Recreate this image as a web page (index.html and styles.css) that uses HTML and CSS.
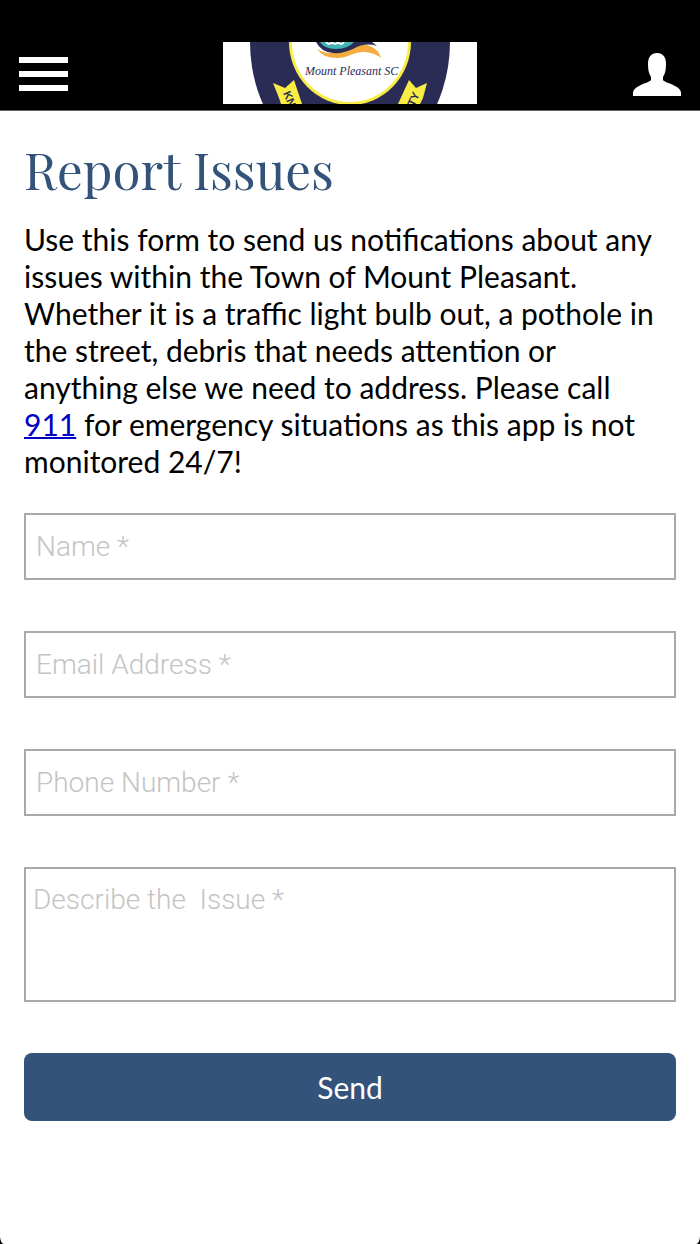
FILE: index.html
```html
<!DOCTYPE html>
<html lang="en">
<head>
<meta charset="utf-8">
<meta name="viewport" content="width=device-width, initial-scale=1">
<title>Report Issues</title>
<link rel="stylesheet" href="styles.css">
</head>
<body>
<div class="screen">
  <header class="topbar">
    <button class="icon-button" type="button" aria-label="Menu">
      <svg width="50" height="34" viewBox="0 0 50 34"><path fill="#fff" d="M1 0h49v6H1zM1 14h49v6H1zM1 28h49v6H1z"/></svg>
    </button>
    <svg class="logo" width="254" height="62" viewBox="0 0 254 62" role="img" aria-label="Mount Pleasant SC">
      <rect width="254" height="62" fill="#fff"/>
      <ellipse cx="127" cy="0" rx="100" ry="126" fill="#2a2c55"/>
      <ellipse cx="127" cy="0" rx="61" ry="63" fill="#f9ec45"/>
      <ellipse cx="127" cy="0" rx="58" ry="60" fill="#fff"/>
      <path fill="#f4ab3f" d="M94 7q6 9 20 9c11 0 17-7 28-6q10 1 16 6-3-9-11-12-12-4-24 3-16 8-29 0z"/>
      <path fill="#2a2c55" d="M93 0h56l5 4q-12-4-24 3-11 5-20 4-12-1-17-11z"/>
      <path fill="#43b5b5" d="M97 0h34q-6 7-18 7-12 0-16-7z"/>
      <path fill="none" stroke="#fff" stroke-width="2" d="M103 0q3 4 6 0q3 4 6 0q3 4 6 0"/>
      <text class="logo-name" x="82" y="33">Mount Pleasant SC</text>
      <path fill="#f9ec45" d="M50 41l12 5 9-8 8 24H58l-2-6z"/>
      <path fill="#f9ec45" d="M204 41l-11 5-7-8-11 24h22l3-6z"/>
      <text class="logo-ribbon" transform="translate(60 51) rotate(67)">KN</text>
      <text class="logo-ribbon" transform="translate(191 65) rotate(-65)">TY</text>
    </svg>
    <button class="icon-button" type="button" aria-label="Account">
      <svg width="50" height="43" viewBox="0 0 50 43"><path fill="#fff" d="M25 0c6 0 9 4 9 11 0 6-1 10-3 13v3c1 2 7 3 12 6 4 2 6 4 6 7v3H1v-3c0-3 2-5 6-7 5-3 11-4 12-6v-3c-2-3-3-7-3-13 0-7 3-11 9-11z"/></svg>
    </button>
  </header>
  <main class="content">
    <h1 class="title">Report Issues</h1>
    <p class="intro">Use this form to send us notifications about any issues within the Town of Mount Pleasant. Whether it is a traffic light bulb out, a pothole in the street, debris that needs attention or anything else we need to address. Please call <a class="phone" href="tel:911">911</a> for emergency situations as this app is not monitored 24/7!</p>
    <form class="form">
      <input class="field" type="text" aria-label="Name" placeholder="Name *" required>
      <input class="field" type="email" aria-label="Email Address" placeholder="Email Address *" required>
      <input class="field" type="tel" aria-label="Phone Number" placeholder="Phone Number *" required>
      <textarea class="field field-long" aria-label="Describe the Issue" placeholder="Describe the  Issue *" required></textarea>
      <button class="send" type="submit">Send</button>
    </form>
  </main>
</div>
</body>
</html>
```
FILE: styles.css
```css
* { box-sizing: border-box; }

body {
  margin: 0;
  background: #000;
  font-family: Lato, sans-serif;
  color: #000;
}

.screen {
  min-height: 100vh;
  background: #fff;
  border-radius: 0 0 4px 4px / 0 0 8px 8px;
}

.topbar {
  display: flex;
  align-items: center;
  justify-content: space-between;
  padding: 42px 18px 6px;
  background: #000;
  border-bottom: 1px solid #666;
}

.icon-button {
  display: flex;
  padding: 2px 0 0;
  border: 0;
  background: none;
}

.logo { display: block; }

.logo-name {
  font: italic 12px "Liberation Serif", serif;
  fill: #2a2c55;
}

.logo-ribbon {
  font: bold 11px "Liberation Sans", sans-serif;
  fill: #2a2c55;
}

.content { padding: 26px 24px; }

.title {
  margin: 0;
  font: 400 51px/64px "Playfair Display", "Liberation Serif", serif;
  color: #33537a;
}

.intro {
  margin: 20px 0 33px;
  padding-right: 12px;
  font-size: 30px;
  line-height: 37px;
}

.phone {
  color: #0000c8;
  text-decoration-thickness: 2px;
}

.form {
  display: flex;
  flex-direction: column;
  gap: 51px;
}

.field {
  display: block;
  width: 100%;
  height: 67px;
  padding: 0 10px;
  border: 2px solid #a9a9a9;
  border-radius: 0;
  background: #fff;
  font: 300 28px/34px "Helvetica Neue", Roboto, sans-serif;
  color: #000;
}

.field::placeholder {
  color: #c4c4c4;
  opacity: 1;
}

.field-long {
  height: 135px;
  padding: 14px 7px;
  resize: none;
}

.send {
  height: 68px;
  border: 0;
  border-radius: 8px;
  background: #33537a;
  font: 400 30px/37px Lato, sans-serif;
  color: #fff;
}
```
